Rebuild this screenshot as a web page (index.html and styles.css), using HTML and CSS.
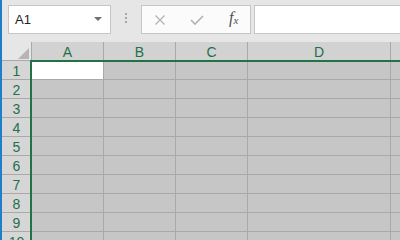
FILE: index.html
```html
<!DOCTYPE html>
<html lang="en">
<head>
    <meta charset="utf-8"/>
    <title>Book1 - Excel</title>
    <link rel="stylesheet" href="styles.css">
</head>
<body>
    <div class="app">
        <div class="edge"></div>
        <div class="main">
            <div class="toolbar">
                <div class="namebox">
                    <span class="ref">A1</span>
                    <span class="caret"></span>
                </div>
                <div class="grip"><i></i><i></i><i></i></div>
                <div class="fbuttons">
                    <svg class="icon" width="12" height="12" viewBox="0 0 12 12">
                        <path d="M1.5 1.5 L10.5 10.5 M10.5 1.5 L1.5 10.5" stroke="#b3b3b3" stroke-width="1.3" fill="none"/>
                    </svg>
                    <svg class="icon" width="14" height="12" viewBox="0 0 14 12">
                        <path d="M1 6 L5 10 L13 2" stroke="#b3b3b3" stroke-width="1.6" fill="none"/>
                    </svg>
                    <span class="fx">f<sub>x</sub></span>
                </div>
                <div class="formula"></div>
            </div>
            <div class="sheet">
                <div class="grid">
                    <div class="corner"><span class="tri"></span></div>
                    <div class="col">A</div>
                    <div class="col">B</div>
                    <div class="col">C</div>
                    <div class="col">D</div>
                    <div class="col"></div>

                    <div class="row">1</div>
                    <div class="cell active"></div><div class="cell"></div><div class="cell"></div><div class="cell"></div><div class="cell"></div>
                    <div class="row">2</div>
                    <div class="cell"></div><div class="cell"></div><div class="cell"></div><div class="cell"></div><div class="cell"></div>
                    <div class="row">3</div>
                    <div class="cell"></div><div class="cell"></div><div class="cell"></div><div class="cell"></div><div class="cell"></div>
                    <div class="row">4</div>
                    <div class="cell"></div><div class="cell"></div><div class="cell"></div><div class="cell"></div><div class="cell"></div>
                    <div class="row">5</div>
                    <div class="cell"></div><div class="cell"></div><div class="cell"></div><div class="cell"></div><div class="cell"></div>
                    <div class="row">6</div>
                    <div class="cell"></div><div class="cell"></div><div class="cell"></div><div class="cell"></div><div class="cell"></div>
                    <div class="row">7</div>
                    <div class="cell"></div><div class="cell"></div><div class="cell"></div><div class="cell"></div><div class="cell"></div>
                    <div class="row">8</div>
                    <div class="cell"></div><div class="cell"></div><div class="cell"></div><div class="cell"></div><div class="cell"></div>
                    <div class="row">9</div>
                    <div class="cell"></div><div class="cell"></div><div class="cell"></div><div class="cell"></div><div class="cell"></div>
                    <div class="row">10</div>
                    <div class="cell"></div><div class="cell"></div><div class="cell"></div><div class="cell"></div><div class="cell"></div>
                </div>
                <div class="selection"></div>
            </div>
        </div>
    </div>
</body>
</html>
```

FILE: styles.css
```css
body {
    margin: 0;
    font-family: "Liberation Sans", Arial, sans-serif;
    background-color: #e6e6e6;
    overflow: hidden;
}

.app {
    display: flex;
    width: 400px;
    height: 240px;
    overflow: hidden;
}

.edge {
    width: 2px;
    flex-shrink: 0;
    background-color: #1e7fc8;
}

.main {
    flex: 1;
    min-width: 0;
    display: flex;
    flex-direction: column;
}

/* formula bar */
.toolbar {
    height: 42px;
    flex-shrink: 0;
    display: flex;
    align-items: flex-start;
    padding: 5px 0 0 6px;
    box-sizing: border-box;
}

.namebox {
    width: 103px;
    height: 29px;
    box-sizing: border-box;
    background-color: #ffffff;
    border: 1px solid #c6c6c6;
    display: flex;
    align-items: center;
    justify-content: space-between;
    padding: 0 8px 0 6px;
}

.namebox .ref {
    font-size: 13px;
    color: #222;
}

.caret {
    width: 0;
    height: 0;
    border-left: 4px solid transparent;
    border-right: 4px solid transparent;
    border-top: 4px solid #707070;
    margin-top: -2px;
}

.grip {
    width: 30px;
    display: flex;
    flex-direction: column;
    align-items: center;
    gap: 2px;
    padding-top: 8px;
}

.grip i {
    width: 2px;
    height: 2px;
    background-color: #a6a6a6;
}

.fbuttons {
    width: 110px;
    height: 29px;
    box-sizing: border-box;
    background-color: #fbfbfb;
    border: 1px solid #c6c6c6;
    display: flex;
    align-items: center;
    padding-left: 12px;
}

.fbuttons .icon {
    margin-right: 24px;
}

.fbuttons .icon + .icon {
    margin-right: 25px;
}

.fx {
    font-family: "Liberation Serif", "Times New Roman", serif;
    font-style: italic;
    font-size: 16px;
    color: #505050;
    margin-top: -3px;
}

.fx sub {
    font-size: 11px;
    vertical-align: -1px;
}

.formula {
    flex: 1;
    height: 29px;
    box-sizing: border-box;
    margin-left: 3px;
    background-color: #ffffff;
    border: 1px solid #c6c6c6;
    border-right: none;
}

/* sheet */
.sheet {
    position: relative;
    flex: 1;
    overflow: hidden;
}

.grid {
    display: grid;
    grid-template-columns: 30px 72px 72px 72px 143px 72px;
    grid-auto-rows: 19px;
}

.grid > div {
    box-sizing: border-box;
    border-right: 1px solid #a9a9a9;
    border-bottom: 1px solid #a9a9a9;
}

.corner {
    background-color: #e6e6e6;
    display: flex;
    justify-content: flex-end;
    align-items: flex-end;
    padding: 0 2px 1px 0;
}

.tri {
    width: 0;
    height: 0;
    border-left: 11px solid transparent;
    border-bottom: 11px solid #b5b5b5;
}

.col,
.row {
    background-color: #d2d2d2;
    color: #1f6f4a;
    font-size: 14px;
    line-height: 17px;
    padding-top: 2px;
    text-align: center;
}

.row {
    background-color: #d6d6d6;
}

.cell {
    background-color: #c6c6c6;
}

.cell.active {
    background-color: #ffffff;
}

.selection {
    position: absolute;
    left: 28px;
    top: 18px;
    right: -4px;
    bottom: -4px;
    border-top: 2px solid #217346;
    border-left: 2px solid #217346;
}
```
